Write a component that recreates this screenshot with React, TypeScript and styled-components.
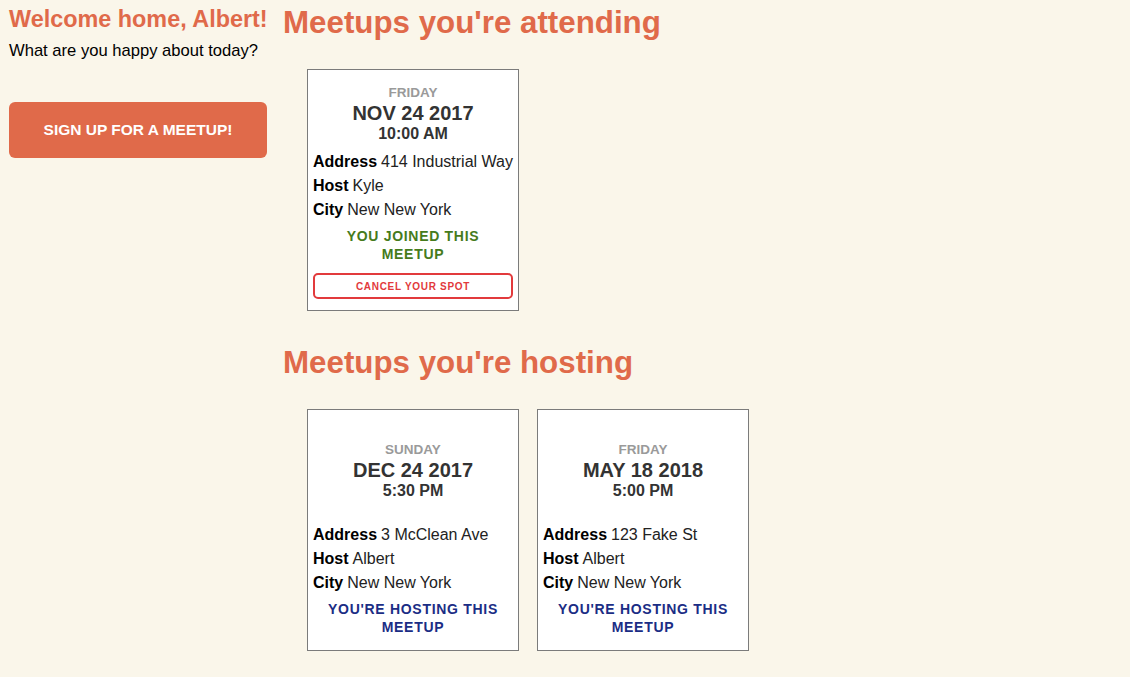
import React from "react";
import styled, { createGlobalStyle } from "styled-components";

const GlobalStyle = createGlobalStyle`
  html, body {
    margin: 0;
    padding: 0;
    background: #faf6ea;
  }
  body {
    font-family: "Liberation Sans", Arial, Helvetica, sans-serif;
    color: #111;
  }
  * { box-sizing: border-box; }
`;

const ORANGE = "#e06a4a";

const Page = styled.div`
  display: flex;
  align-items: flex-start;
  gap: 16px;
  padding: 5px 0 0 9px;
  min-height: 677px;
`;

const Sidebar = styled.aside`
  width: 258px;
  flex: none;
  display: flex;
  flex-direction: column;
  padding-top: 1px;
`;

const Welcome = styled.h1`
  margin: 0;
  font-size: 23.4px;
  line-height: 27px;
  font-weight: 700;
  color: ${ORANGE};
  white-space: nowrap;
`;

const Prompt = styled.p`
  margin: 8px 0 0;
  font-size: 16.6px;
  line-height: 20px;
  color: #000;
  white-space: nowrap;
`;

const SignUpButton = styled.button`
  margin-top: 41px;
  height: 56px;
  width: 258px;
  border: none;
  border-radius: 6px;
  background: ${ORANGE};
  color: #fff;
  font-family: inherit;
  font-size: 15.5px;
  font-weight: 700;
  text-transform: uppercase;
  cursor: pointer;
`;

const Main = styled.main`
  display: flex;
  flex-direction: column;
`;

const SectionTitle = styled.h2<{ $spaced?: boolean }>`
  margin: ${(p) => (p.$spaced ? "34px" : "0")} 0 0;
  font-size: 31.3px;
  line-height: 36px;
  font-weight: 700;
  color: ${ORANGE};
  white-space: nowrap;
`;

const CardList = styled.div`
  display: flex;
  gap: 18px;
  margin-top: 28px;
  padding-left: 24px;
`;

const Card = styled.article`
  width: 212px;
  height: 242px;
  display: flex;
  flex-direction: column;
  background: #fff;
  border: 1px solid #7b7b7b;
  padding: 15px 5px 11px;
`;

const DateBlock = styled.div`
  margin-top: auto;
  display: flex;
  flex-direction: column;
  align-items: center;
  text-align: center;
`;

const Day = styled.div`
  font-size: 13.5px;
  line-height: 16px;
  font-weight: 700;
  color: #9a9a9a;
  text-transform: uppercase;
`;

const DateLine = styled.div`
  font-size: 20px;
  line-height: 24px;
  font-weight: 700;
  color: #333;
`;

const TimeLine = styled.div`
  font-size: 16px;
  line-height: 18px;
  font-weight: 700;
  color: #333;
`;

const Details = styled.dl`
  margin: auto 0 0;
  padding-top: 7px;
`;

const Row = styled.div`
  font-size: 16px;
  line-height: 24px;
  white-space: nowrap;
`;

const Label = styled.dt`
  display: inline;
  font-weight: 700;
  color: #000;
`;

const Value = styled.dd`
  display: inline;
  margin: 0 0 0 4px;
  color: #222;
`;

const Status = styled.div<{ $tone: "joined" | "hosting" }>`
  margin-top: 5px;
  margin-bottom: ${(p) => (p.$tone === "hosting" ? "3px" : "0")};
  padding: 0 8px;
  text-align: center;
  font-size: 14px;
  line-height: 18px;
  font-weight: 700;
  letter-spacing: 0.7px;
  text-transform: uppercase;
  color: ${(p) => (p.$tone === "joined" ? "#467b1c" : "#1b2d85")};
`;

const CancelButton = styled.button`
  margin-top: 10px;
  height: 26px;
  width: 100%;
  background: #fff;
  border: 2px solid #e23a3c;
  border-radius: 5px;
  color: #e23a3c;
  font-family: inherit;
  font-size: 10px;
  font-weight: 700;
  letter-spacing: 0.7px;
  text-transform: uppercase;
  cursor: pointer;
`;

type Meetup = {
  day: string;
  date: string;
  time: string;
  address: string;
  host: string;
  city: string;
};

const attending: Meetup[] = [
  {
    day: "Friday",
    date: "NOV 24 2017",
    time: "10:00 AM",
    address: "414 Industrial Way",
    host: "Kyle",
    city: "New New York",
  },
];

const hosting: Meetup[] = [
  {
    day: "Sunday",
    date: "DEC 24 2017",
    time: "5:30 PM",
    address: "3 McClean Ave",
    host: "Albert",
    city: "New New York",
  },
  {
    day: "Friday",
    date: "MAY 18 2018",
    time: "5:00 PM",
    address: "123 Fake St",
    host: "Albert",
    city: "New New York",
  },
];

function MeetupCard({ m, mode }: { m: Meetup; mode: "joined" | "hosting" }) {
  return (
    <Card>
      <DateBlock>
        <Day>{m.day}</Day>
        <DateLine>{m.date}</DateLine>
        <TimeLine>{m.time}</TimeLine>
      </DateBlock>
      <Details>
        <Row>
          <Label>Address</Label>
          <Value>{m.address}</Value>
        </Row>
        <Row>
          <Label>Host</Label>
          <Value>{m.host}</Value>
        </Row>
        <Row>
          <Label>City</Label>
          <Value>{m.city}</Value>
        </Row>
      </Details>
      <Status $tone={mode}>
        {mode === "joined" ? "You joined this meetup" : "You're hosting this meetup"}
      </Status>
      {mode === "joined" && <CancelButton>Cancel your spot</CancelButton>}
    </Card>
  );
}

export default function App() {
  return (
    <>
      <GlobalStyle />
      <Page>
        <Sidebar>
          <Welcome>Welcome home, Albert!</Welcome>
          <Prompt>What are you happy about today?</Prompt>
          <SignUpButton>Sign up for a meetup!</SignUpButton>
        </Sidebar>
        <Main>
          <SectionTitle>Meetups you're attending</SectionTitle>
          <CardList>
            {attending.map((m) => (
              <MeetupCard key={m.date} m={m} mode="joined" />
            ))}
          </CardList>
          <SectionTitle $spaced>Meetups you're hosting</SectionTitle>
          <CardList>
            {hosting.map((m) => (
              <MeetupCard key={m.date} m={m} mode="hosting" />
            ))}
          </CardList>
        </Main>
      </Page>
    </>
  );
}
